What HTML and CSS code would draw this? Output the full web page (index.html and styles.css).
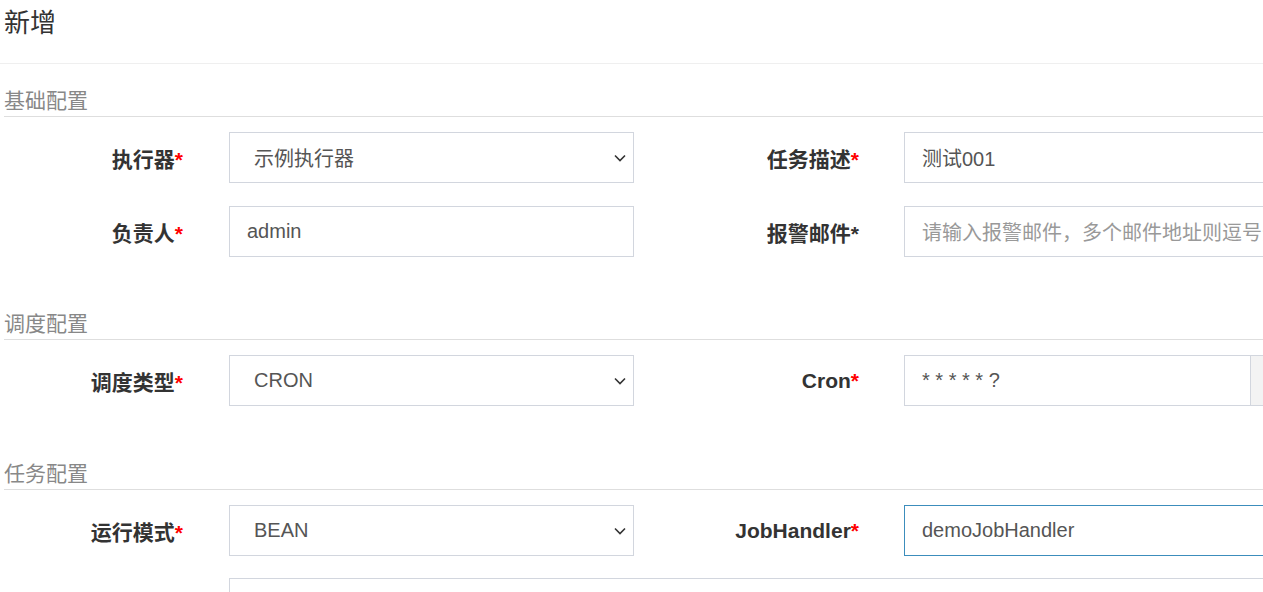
FILE: index.html
```html
<!DOCTYPE html>
<html lang="zh-CN">
<head>
<meta charset="utf-8">
<title>新增</title>
<link rel="stylesheet" href="styles.css">
</head>
<body>
<div class="modal">
  <div class="modal-header">
    <h4 class="modal-title">新增</h4>
  </div>
  <div class="modal-body">
    <p class="section first">基础配置</p>
    <div class="form-row">
      <label class="ctl-label">执行器<span class="req">*</span></label>
      <div class="field select"><span class="val">示例执行器</span><svg class="chev" width="12" height="8" viewBox="0 0 12 8"><path d="M1 1.5 L6 6.5 L11 1.5" fill="none" stroke="#333" stroke-width="1.6"/></svg></div>
      <label class="ctl-label right">任务描述<span class="req">*</span></label>
      <div class="field"><span class="val">测试001</span></div>
    </div>
    <div class="form-row">
      <label class="ctl-label">负责人<span class="req">*</span></label>
      <div class="field"><span class="val">admin</span></div>
      <label class="ctl-label right">报警邮件<span class="plain">*</span></label>
      <div class="field"><span class="ph">请输入报警邮件，多个邮件地址则逗号分隔</span></div>
    </div>

    <p class="section">调度配置</p>
    <div class="form-row">
      <label class="ctl-label">调度类型<span class="req">*</span></label>
      <div class="field select"><span class="val">CRON</span><svg class="chev" width="12" height="8" viewBox="0 0 12 8"><path d="M1 1.5 L6 6.5 L11 1.5" fill="none" stroke="#333" stroke-width="1.6"/></svg></div>
      <label class="ctl-label right">Cron<span class="req">*</span></label>
      <div class="input-group">
        <div class="field grow"><span class="val cron">* * * * * ?</span></div>
        <div class="addon"></div>
      </div>
    </div>

    <p class="section third">任务配置</p>
    <div class="form-row last">
      <label class="ctl-label">运行模式<span class="req">*</span></label>
      <div class="field select"><span class="val">BEAN</span><svg class="chev" width="12" height="8" viewBox="0 0 12 8"><path d="M1 1.5 L6 6.5 L11 1.5" fill="none" stroke="#333" stroke-width="1.6"/></svg></div>
      <label class="ctl-label right">JobHandler<span class="req">*</span></label>
      <div class="field focus"><span class="val">demoJobHandler</span></div>
    </div>
    <div class="form-row tall">
      <label class="ctl-label"></label>
      <div class="field textarea"><span class="ph">请输入任务参数</span></div>
    </div>
  </div>
</div>
</body>
</html>
```

FILE: styles.css
```css
html, body {
  margin: 0;
  padding: 0;
  height: 592px;
  overflow: hidden;
  background: #fff;
}
body {
  font-family: "Liberation Sans", "Noto Sans CJK SC", sans-serif;
  color: #333;
}
.modal {
  width: 1320px;
}
.modal-header {
  padding: 5px 4px 21px;
  border-bottom: 1px solid #efefef;
}
.modal-title {
  margin: 0;
  font-size: 26px;
  line-height: 37px;
  font-weight: normal;
  color: #333;
}
.modal-body {
  display: flex;
  flex-direction: column;
  padding: 0 0 0 4px;
}
.section {
  margin: 29px 0 15px;
  height: 30px;
  line-height: 30px;
  font-size: 21px;
  color: #888;
  border-bottom: 1px solid #dedede;
}
.section.first {
  margin-top: 22px;
}
.section.third {
  margin-top: 30px;
}
.form-row {
  display: flex;
  align-items: center;
  height: 51px;
  margin-bottom: 23px;
  margin-left: -4px;
}
.form-row.last {
  margin-bottom: 22px;
}
.ctl-label {
  flex: none;
  width: 183px;
  margin-right: 46px;
  text-align: right;
  font-size: 21px;
  font-weight: bold;
  color: #333;
}
.ctl-label.right {
  width: 225px;
  margin-right: 45px;
}
.req {
  color: #f00;
}
.field {
  flex: none;
  box-sizing: border-box;
  width: 405px;
  height: 51px;
  border: 1px solid #d2d6de;
  padding: 0 17px;
  display: flex;
  align-items: center;
  font-size: 20px;
  color: #555;
  white-space: nowrap;
  overflow: hidden;
  background: #fff;
}
.field.select {
  padding-left: 24px;
  padding-right: 7px;
}
.field.select .val {
  flex: 1;
}
.chev {
  flex: none;
}
.field.focus {
  border-color: #3c8dbc;
}
.ph {
  color: #999;
}
.cron {
  font-size: 20px;
  color: #555;
}
.input-group {
  flex: none;
  display: flex;
  width: 405px;
  height: 51px;
}
.field.grow {
  width: 347px;
}
.addon {
  flex: 1;
  box-sizing: border-box;
  height: 51px;
  margin-left: -1px;
  border: 1px solid #d2d6de;
  background: #f3f3f3;
}
.form-row.tall {
  height: 120px;
  align-items: flex-start;
}
.field.textarea {
  width: 1080px;
  height: 120px;
  align-items: flex-start;
  padding-top: 9px;
}
```
